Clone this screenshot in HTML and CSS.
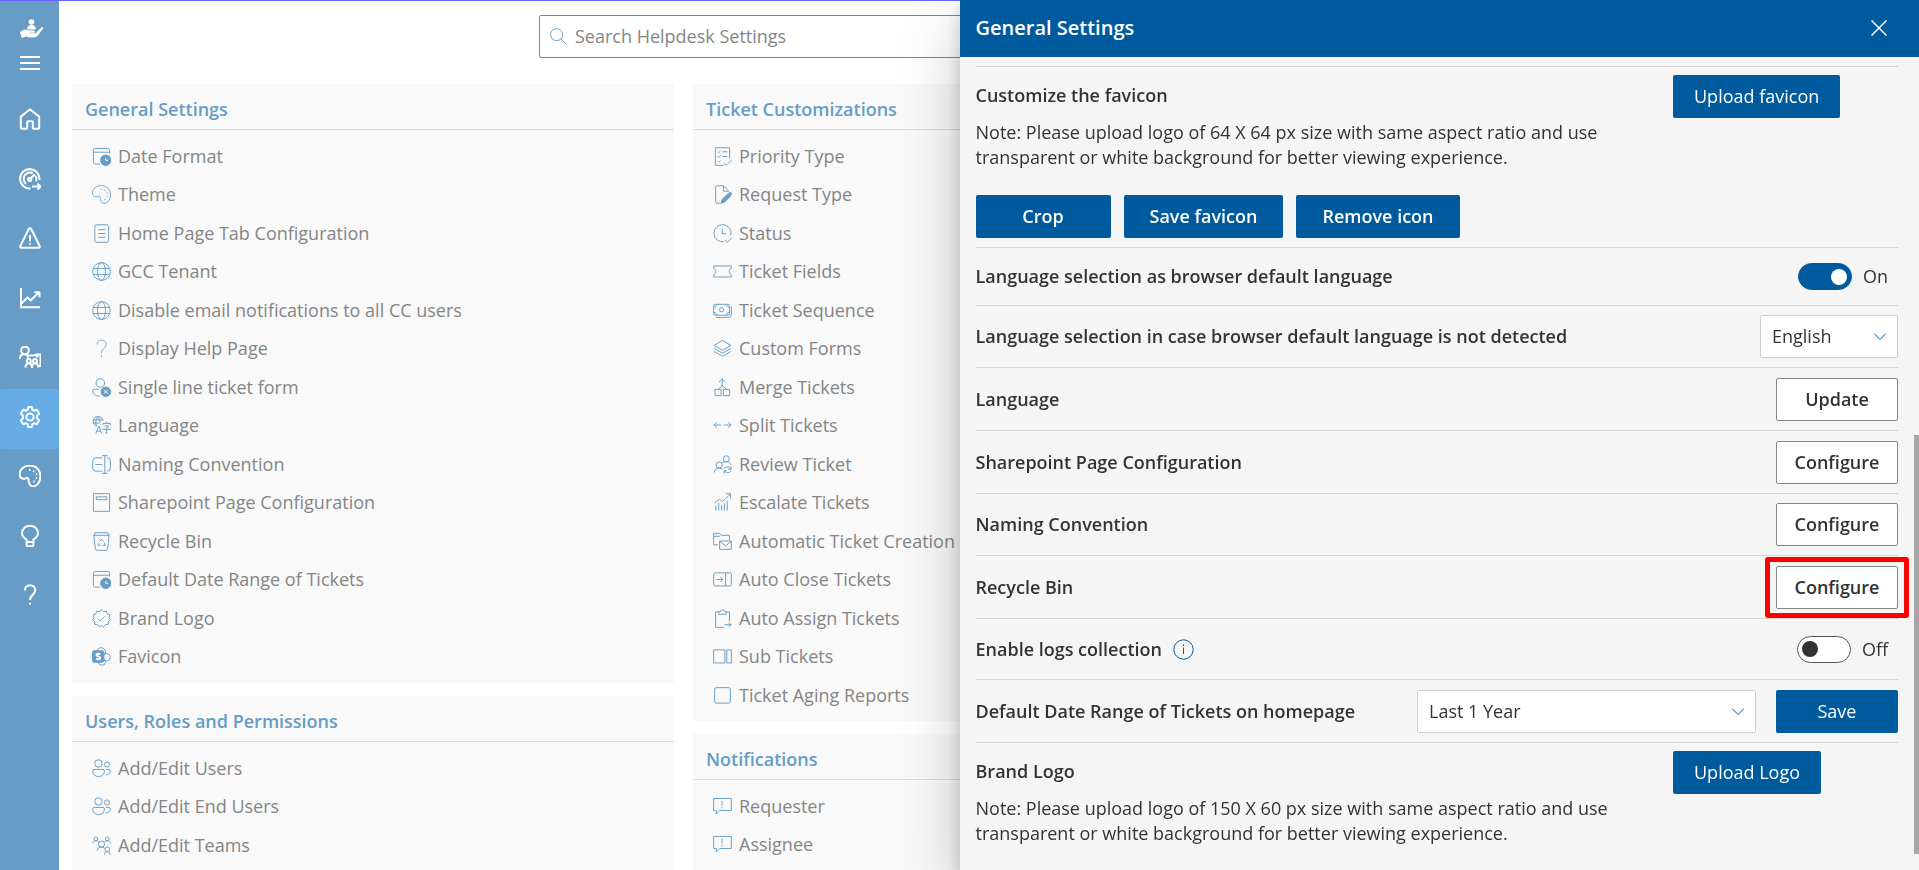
FILE: index.html
```html
<!DOCTYPE html>
<html lang="en">
<head>
<meta charset="utf-8">
<title>Helpdesk Settings</title>
<link rel="stylesheet" href="styles.css">
</head>
<body>
<svg class="sprite" aria-hidden="true">
  <symbol id="i-home" viewBox="0 0 22 22"><path d="M1.8 8.6 11 1.2l9.2 7.4v11.1a1 1 0 0 1-1 1h-4.600a.8.8 0 0 1-.8-.8v-5.600a1 1 0 0 0-1-1H9.200a1 1 0 0 0-1 1v5.600a.8.8 0 0 1-.8.8H2.800a1 1 0 0 1-1-1z"/></symbol>
  <symbol id="i-gauge" viewBox="0 0 22 22"><path d="M11.500 20.500A9.700 9.700 0 1 1 20.400 12M7 16a6.600 6.600 0 0 1-2.300-5A6.300 6.300 0 0 1 11 4.500c1 0 1.900.2 2.700.6M16.500 7.800A6.600 6.600 0 0 1 17 13.500M11.800 10.200 15.800 6.200M13 18.500h8.500M18.500 15.500l3 3-3 3"/><circle cx="10.700" cy="11.300" r="1.600"/></symbol>
  <symbol id="i-warn" viewBox="0 0 22 22"><path d="M11 1.200c.5 0 .9.300 1.200.8l8.500 17c.4.900-.1 1.700-1 1.700H2.300c-.9 0-1.400-.8-1-1.700l8.500-17c.3-.5.7-.8 1.200-.8zM11 8v6.500M11 16.200v1.600"/></symbol>
  <symbol id="i-chart" viewBox="0 0 22 22"><path d="M2 1v19.200h19M2.500 16.500l6-6 3.200 3 8-8M15.500 5.200h5v5"/></symbol>
  <symbol id="i-train" viewBox="0 0 22 22"><circle cx="6" cy="4.500" r="3.800"/><path d="M.8 13c0-3 2-4.700 4.700-4.700 1.800 0 3 .6 4 2M9.500 9.500h6M8.800 9.500v3M15.500 9.500l2-1h4v11.500h-1.500M17 10.500h2.500"/><circle cx="9.800" cy="15" r="2"/><circle cx="16" cy="15" r="2"/><path d="M6.500 21.500c0-2.800 1.300-4 3.300-4s3.200 1.200 3.200 4c0-2.800 1.200-4 3-4s3.300 1.200 3.300 4"/></symbol>
  <symbol id="i-gear" viewBox="0 0 22 22"><circle cx="11" cy="11" r="3.600"/><path d="M9.300.9h3.400l.7 3 1.500.8 2.900-.9 2.300 3.800-2.100 2.100v2.600l2.100 2.100-2.300 3.800-2.900-.9-1.500.8-.7 3H9.300l-.7-3-1.500-.8-2.900.9-2.300-3.800L4 12.300V9.700L1.900 7.600l2.300-3.800 2.900.9 1.500-.8z"/></symbol>
  <symbol id="i-palette" viewBox="0 0 22 22"><path d="M9 13.200c-1.200-1-2.600.7-4.300.6C2 13.700.6 11.500.6 9 .6 4.200 5.500.6 11 .6c6 0 10.400 4.600 10.400 10.400 0 6-3.400 10.400-7.400 10.400-2.500 0-3.600-1.800-4.200-4.400-.3-1.500.2-2.900-.8-3.800z"/><path d="M10 5h1.400M14 6.200h1.400M16.800 9.200h1.400M16.800 13h1.400M14.200 16.500h1.400"/></symbol>
  <symbol id="i-bulb" viewBox="0 0 22 22"><path d="M7.600 14.600C4.900 12.800 3 10.800 3 8.200A7.700 7.700 0 0 1 11 .8a7.700 7.700 0 0 1 8 7.400c0 2.600-1.900 4.600-4.600 6.400v5.200a1.500 1.500 0 0 1-1.500 1.500H9.100a1.500 1.500 0 0 1-1.500-1.500zM7.600 17h6.800"/></symbol>
  <symbol id="i-help" viewBox="0 0 22 22"><path d="M5.800 6.500c0-3.300 2.200-5.300 5.200-5.300s5.300 2 5.300 5c0 2.300-1.200 3.600-2.800 4.900-1.700 1.400-2.500 2.500-2.500 4.900"/><path d="M11 18.800v1.800"/></symbol>
  <symbol id="i-cal" viewBox="0 0 20 20"><path d="M8.500 18H3.500A2 2 0 0 1 1.500 16V3.500a2 2 0 0 1 2-2h13a2 2 0 0 1 2 2V7M1.500 5.500h17"/><circle class="fill" cx="14.500" cy="14" r="5.500"/><path class="cut" d="M14.500 11.500V14h2.500"/></symbol>
  <symbol id="i-doc" viewBox="0 0 20 20"><rect x="3" y=".8" width="14.500" height="18.500" rx="2"/><path d="M6.500 6h7.500M6.500 10h7.500M6.500 14h7.500"/></symbol>
  <symbol id="i-globe" viewBox="0 0 20 20"><circle cx="10" cy="10" r="9.300"/><ellipse cx="10" cy="10" rx="4.200" ry="9.300"/><path d="M1.500 6.800h17M1.500 13.200h17"/></symbol>
  <symbol id="i-userx" viewBox="0 0 20 20"><circle cx="8.800" cy="5.200" r="4.500"/><path d="M7 11.800H2.500A1.800 1.800 0 0 0 .7 13.600c0 3.200 2.800 5.500 7.300 5.500"/><circle class="fill" cx="14.500" cy="14.500" r="5"/><path class="cut" d="m12.500 12.500 4 4m0-4-4 4"/></symbol>
  <symbol id="i-lang" viewBox="0 0 20 20"><path d="M5 10.500A5 5 0 1 1 11.300 5M1 4h10M1 7.500h7M6 1C3.500 4 3.500 7 5 10.500M6 1c1.500 1 2.500 3 2.500 6M4 18.500l3.200-8 3.200 8M5.300 16h4M11.500 9.500V7.800h8v1.700M15.500 6v1.800M13 10.500h4.500l-2 2V18h-1.800M11 14h9"/></symbol>
  <symbol id="i-rename" viewBox="0 0 20 20"><path d="M11 3H4a3.200 3.200 0 0 0-3.200 3.200v7.600A3.200 3.200 0 0 0 4 17h7M16 3a3.200 3.200 0 0 1 3.300 3.200v7.600A3.200 3.200 0 0 1 16 17M13.500.7v18.600M10.500.7h6M10.500 19.300h6M3.500 10h7.500"/></symbol>
  <symbol id="i-page" viewBox="0 0 20 20"><path d="M1.500.7h17v18.600h-17zM4.500 4h11v3h-11z"/></symbol>
  <symbol id="i-recycle" viewBox="0 0 20 20"><path d="M2 3.500 3.300.8h13.400L18 3.500 16.500 17.500a2 2 0 0 1-2 1.800h-9a2 2 0 0 1-2-1.800zM2 3.500h16M8 10l2-2.500L12 10M13 11.500l1 2.500h-3M9 14H6.500l1-2.500"/></symbol>
  <symbol id="i-badge" viewBox="0 0 20 20"><path d="M10 .7 12.200 2.800 15.200 2.300 15.900 5 18.700 6.100 17.900 9 19.300 11.300 17.200 13.300 17 16.200 14.100 16.500 12.200 18.900 10 17.300 7.800 18.900 5.900 16.500 3 16.200 2.800 13.300.7 11.300 2.100 9 1.300 6.100 4.100 5 4.800 2.300 7.800 2.800zM6.500 10.200l2.300 2.300 4.600-4.700"/></symbol>
  <symbol id="i-share" viewBox="0 0 20 20"><circle cx="9.500" cy="5.500" r="4.800"/><circle cx="15.300" cy="10.800" r="4"/><circle cx="10.500" cy="15.500" r="3.700"/><rect class="fill" x=".5" y="4" width="12" height="12" rx="1.500"/><path class="cut thick" d="M8.800 7.600C7 6.600 4.600 7 4.600 8.500c0 1.800 4.100 1.200 4.100 3 0 1.500-2.500 1.800-4.300.8"/></symbol>
  <symbol id="i-users" viewBox="0 0 20 20"><circle cx="6.800" cy="4.700" r="3.900"/><circle cx="15.800" cy="5.800" r="2.700"/><path d="M2.200 11h9.400c.9 0 1.500.6 1.500 1.500 0 3.500-2.400 6-6.200 6s-6.200-2.500-6.200-6c0-.9.600-1.500 1.500-1.500zM14.500 11h3.300c.9 0 1.500.6 1.500 1.500 0 2.700-1.800 4.200-5 4.200"/></symbol>
  <symbol id="i-team" viewBox="0 0 20 20"><circle cx="4" cy="3" r="2"/><circle cx="16" cy="3" r="2"/><circle cx="10" cy="8.500" r="3.200"/><circle cx="16" cy="14" r="2.500"/><path d="M.8 8C.8 5.800 2 5 4 5c1.600 0 2.500.6 3 1.800M19.200 8c0-2.200-1.200-3-3.200-3-1.600 0-2.500.6-3 1.800M5.500 15.500c0-2.500 1.500-3.800 4.500-3.800 1.300 0 2.300.3 3 1M13 20c0-2.500 1-3.500 3-3.500s3 1 3 3.500"/></symbol>
  <symbol id="i-list" viewBox="0 0 20 20"><path d="M17.500 12V.8h-15v18.500h9M5 5l1 1 2-2M10 5h5M5 10l1 1 2-2M10 10h5M5 15l1 1 2-2M11.500 17l2.500 2.300 5.500-5.500"/></symbol>
  <symbol id="i-edit" viewBox="0 0 20 20"><path d="M8 19.200H4.300a1.500 1.500 0 0 1-1.500-1.500V2.300A1.500 1.500 0 0 1 4.300.8H11l5.500 5.700M11 .8v5.700h5.500"/><path class="fill" d="m9.500 15.200 6.700-6.300 2.600 2.500-6.600 6.600-3.400 1.200zM17 8.200c1.500-1.300 3.500.7 2.400 2.300z"/></symbol>
  <symbol id="i-clock" viewBox="0 0 20 20"><path d="M11.500 18.600A9 9 0 1 1 18.700 12M9.700 4.500v5.800h4M12.500 17l2.500 2.300 4.800-4.800"/></symbol>
  <symbol id="i-ticket" viewBox="0 0 20 20"><path d="M.7 4.200h18.600v2.500c-3 1.200-3 5.400 0 6.600v2.500H.7v-2.500c3-1.200 3-5.400 0-6.600z"/></symbol>
  <symbol id="i-money" viewBox="0 0 20 20"><rect x=".7" y="3.500" width="16.600" height="11.500" rx="1.500"/><circle cx="9" cy="9.200" r="2.200"/><path d="M.7 6.500c2 0 3-1 3-3M17.300 6.500c-2 0-3-1-3-3M.7 12c2 0 3 1 3 3M17.300 12c-2 0-3 1-3 3M3 17.300h13.300a3 3 0 0 0 3-3V5.500"/></symbol>
  <symbol id="i-layers" viewBox="0 0 20 20"><path d="m10 1.500 8.800 5.300L10 12 1.200 6.800zM1.200 10 10 15l8.800-5M1.200 13.200 10 18.300l8.800-5.100"/></symbol>
  <symbol id="i-merge" viewBox="0 0 20 20"><path d="M2 12h6.500v6.500H2zM11 12h6.500v6.500H11zM6 12c0-2 3.700-2 3.700-5V1M9.700 7c0 3 4 3 4 5M6.200 4.300 9.700 1l3.500 3.300"/></symbol>
  <symbol id="i-split" viewBox="0 0 20 20"><path d="M8.500 9.500H1M4 6.500l-3 3 3 3M11.500 9.500H19M16 6.500l3 3-3 3"/></symbol>
  <symbol id="i-review" viewBox="0 0 20 20"><circle cx="14" cy="4" r="3.200"/><circle cx="6.500" cy="10.500" r="3.300"/><path d="M1.500 18.500c0-3 1.800-4.700 5-4.700 1.500 0 2.600.4 3.400 1.100M9.800 8c1-.6 2.500-.9 4.200-.9 2.800 0 4.500 1.300 4.900 3.400M11.500 14.500c1-2.300 5.500-2.800 7 0M19 12v3h-3M19.200 16.500c-1 2.500-5.500 2.800-7 .2M11.800 19.500v-3h2.700"/></symbol>
  <symbol id="i-escalate" viewBox="0 0 20 20"><path d="m1.500 10.500 5.500-4 3 2.500 8.500-8M13.500.8h5v5M3 13v5.500M6 10.500v8M9 12.500v6M12 11v7.500M15 8.500v10"/></symbol>
  <symbol id="i-mail" viewBox="0 0 20 20"><path d="M5 13.500H.7V1.500h6l2 2h8.600v5M.7 4.500h6.500M7 9.500h12.300v8.800H7zM7 10l6.200 4.500 6.100-4.500"/></symbol>
  <symbol id="i-exit" viewBox="0 0 20 20"><rect x=".7" y="3" width="18.600" height="13.800" rx="1.500"/><path d="M13.300 3v13.800M3.500 10H10M7.500 7.300 10.200 10l-2.700 2.700"/></symbol>
  <symbol id="i-clip" viewBox="0 0 20 20"><path d="M6 3H2.800v16.300h9M14 3h3.300v10M6 2.800h2a2 2 0 0 1 4 0h2v2.700H6zM12 16.500h7M16.500 14l2.500 2.500-2.500 2.500"/></symbol>
  <symbol id="i-columns" viewBox="0 0 20 20"><path d="M.7 3h11.800v13.800H.7zM14.500 3h4.800v13.800h-4.800z"/></symbol>
  <symbol id="i-square" viewBox="0 0 20 20"><rect x="1.700" y="1.700" width="16.600" height="16.300" rx="2"/></symbol>
  <symbol id="i-chat" viewBox="0 0 20 20"><path d="M.7 1.500h18.600v12.700H7L3.500 18v-3.800H.7zM9.500 4v5M9.500 10.500V12"/></symbol>
</svg>

<div class="app">
  <nav class="rail" aria-label="Main">
    <svg class="logo" viewBox="0 0 24 20"><circle cx="11.500" cy="3" r="2.800"/><path d="M7.300 10.500c0-3.500 1.700-4.500 4.200-4.500s4.200 1 4.200 4.500zM0 13.200c2-1.500 4-3 6.300-2.500l3 .9h4.500c1.300 0 1.600 1.800.2 2.200H9.500v.5h6l5.500-5.600c1-.9 2.800-.3 2.200.9L17.500 17c-.8.9-1.600 1.300-3 1.300l-6 .3-2.500-1L1.800 19z"/></svg>
    <button class="menu" aria-label="Menu"><svg viewBox="0 0 20 14"><path d="M0 1h20M0 7h20M0 13h20"/></svg></button>
    <a href="#" aria-label="Home"><svg><use href="#i-home"/></svg></a>
    <a href="#" aria-label="Dashboard"><svg><use href="#i-gauge"/></svg></a>
    <a href="#" aria-label="Alerts"><svg><use href="#i-warn"/></svg></a>
    <a href="#" aria-label="Reports"><svg><use href="#i-chart"/></svg></a>
    <a href="#" aria-label="Teams"><svg><use href="#i-train"/></svg></a>
    <a href="#" aria-label="Settings" class="active"><svg><use href="#i-gear"/></svg></a>
    <a href="#" aria-label="Theme"><svg><use href="#i-palette"/></svg></a>
    <a href="#" aria-label="Ideas"><svg><use href="#i-bulb"/></svg></a>
    <a href="#" aria-label="Help"><svg><use href="#i-help"/></svg></a>
  </nav>

  <main class="main">
    <label class="search">
      <svg viewBox="0 0 18 18"><circle cx="7" cy="7" r="6.400"/><path d="m11.500 11.500 6 6"/></svg>
      <input type="search" placeholder="Search Helpdesk Settings" aria-label="Search Helpdesk Settings">
    </label>
    <div class="columns">
      <div class="column">
        <section class="card">
          <h2>General Settings</h2>
          <ul>
            <li><a href="#"><svg><use href="#i-cal"/></svg>Date Format</a></li>
            <li><a href="#"><svg><use href="#i-palette"/></svg>Theme</a></li>
            <li><a href="#"><svg><use href="#i-doc"/></svg>Home Page Tab Configuration</a></li>
            <li><a href="#"><svg><use href="#i-globe"/></svg>GCC Tenant</a></li>
            <li><a href="#"><svg><use href="#i-globe"/></svg>Disable email notifications to all CC users</a></li>
            <li><a href="#"><svg><use href="#i-help"/></svg>Display Help Page</a></li>
            <li><a href="#"><svg><use href="#i-userx"/></svg>Single line ticket form</a></li>
            <li><a href="#"><svg><use href="#i-lang"/></svg>Language</a></li>
            <li><a href="#"><svg><use href="#i-rename"/></svg>Naming Convention</a></li>
            <li><a href="#"><svg><use href="#i-page"/></svg>Sharepoint Page Configuration</a></li>
            <li><a href="#"><svg><use href="#i-recycle"/></svg>Recycle Bin</a></li>
            <li><a href="#"><svg><use href="#i-cal"/></svg>Default Date Range of Tickets</a></li>
            <li><a href="#"><svg><use href="#i-badge"/></svg>Brand Logo</a></li>
            <li><a href="#"><svg><use href="#i-share"/></svg>Favicon</a></li>
          </ul>
        </section>
        <section class="card">
          <h2>Users, Roles and Permissions</h2>
          <ul>
            <li><a href="#"><svg><use href="#i-users"/></svg>Add/Edit Users</a></li>
            <li><a href="#"><svg><use href="#i-users"/></svg>Add/Edit End Users</a></li>
            <li><a href="#"><svg><use href="#i-team"/></svg>Add/Edit Teams</a></li>
          </ul>
        </section>
      </div>
      <div class="column">
        <section class="card">
          <h2>Ticket Customizations</h2>
          <ul>
            <li><a href="#"><svg><use href="#i-list"/></svg>Priority Type</a></li>
            <li><a href="#"><svg><use href="#i-edit"/></svg>Request Type</a></li>
            <li><a href="#"><svg><use href="#i-clock"/></svg>Status</a></li>
            <li><a href="#"><svg><use href="#i-ticket"/></svg>Ticket Fields</a></li>
            <li><a href="#"><svg><use href="#i-money"/></svg>Ticket Sequence</a></li>
            <li><a href="#"><svg><use href="#i-layers"/></svg>Custom Forms</a></li>
            <li><a href="#"><svg><use href="#i-merge"/></svg>Merge Tickets</a></li>
            <li><a href="#"><svg><use href="#i-split"/></svg>Split Tickets</a></li>
            <li><a href="#"><svg><use href="#i-review"/></svg>Review Ticket</a></li>
            <li><a href="#"><svg><use href="#i-escalate"/></svg>Escalate Tickets</a></li>
            <li><a href="#"><svg><use href="#i-mail"/></svg>Automatic Ticket Creation</a></li>
            <li><a href="#"><svg><use href="#i-exit"/></svg>Auto Close Tickets</a></li>
            <li><a href="#"><svg><use href="#i-clip"/></svg>Auto Assign Tickets</a></li>
            <li><a href="#"><svg><use href="#i-columns"/></svg>Sub Tickets</a></li>
            <li><a href="#"><svg><use href="#i-square"/></svg>Ticket Aging Reports</a></li>
          </ul>
        </section>
        <section class="card">
          <h2>Notifications</h2>
          <ul>
            <li><a href="#"><svg><use href="#i-chat"/></svg>Requester</a></li>
            <li><a href="#"><svg><use href="#i-chat"/></svg>Assignee</a></li>
          </ul>
        </section>
      </div>
    </div>
  </main>
</div>

<aside class="panel" aria-label="General Settings">
  <header class="panel-head">
    <h1>General Settings</h1>
    <button class="close" aria-label="Close"><svg viewBox="0 0 16 16"><path d="m.5.500 15 15m0-15-15 15"/></svg></button>
  </header>
  <div class="panel-body">
    <section class="upload">
      <div class="upload-text">
        <h3>Customize the favicon</h3>
        <p>Note: Please upload logo of 64 X 64 px size with same aspect ratio and use transparent or white background for better viewing experience.</p>
      </div>
      <div><button class="btn primary light">Upload favicon</button></div>
      <div class="actions">
        <button class="btn primary crop">Crop</button>
        <button class="btn primary">Save favicon</button>
        <button class="btn primary">Remove icon</button>
      </div>
    </section>
    <div class="row row-toggle">
      <label for="lang-auto">Language selection as browser default language</label>
      <span class="toggle"><input type="checkbox" role="switch" id="lang-auto" checked><span>On</span></span>
    </div>
    <div class="row row-snug">
      <label for="lang">Language selection in case browser default language is not detected</label>
      <span class="select"><select id="lang"><option>English</option></select><svg viewBox="0 0 12 7"><path d="m0 .5 6 6 6-6"/></svg></span>
    </div>
    <div class="row"><h3>Language</h3><button class="btn outline">Update</button></div>
    <div class="row"><h3>Sharepoint Page Configuration</h3><button class="btn outline">Configure</button></div>
    <div class="row row-snug"><h3>Naming Convention</h3><button class="btn outline">Configure</button></div>
    <div class="row"><h3>Recycle Bin</h3><button class="btn outline highlight">Configure</button></div>
    <div class="row row-log">
      <div class="with-info">
        <label for="logs">Enable logs collection</label>
        <svg class="info" viewBox="0 0 21 21" role="img" aria-label="Information"><circle cx="10.500" cy="10.500" r="9.700"/><path d="M10.500 8.500v6.500M10.500 5.500v1.500"/></svg>
      </div>
      <span class="toggle"><input type="checkbox" role="switch" id="logs"><span>Off</span></span>
    </div>
    <div class="row">
      <label for="range">Default Date Range of Tickets on homepage</label>
      <div class="range">
        <span class="select wide"><select id="range"><option>Last 1 Year</option></select><svg viewBox="0 0 12 7"><path d="m0 .5 6 6 6-6"/></svg></span>
        <button class="btn primary light save">Save</button>
      </div>
    </div>
    <section class="upload last">
      <div class="upload-text">
        <h3>Brand Logo</h3>
        <p>Note: Please upload logo of 150 X 60 px size with same aspect ratio and use transparent or white background for better viewing experience.</p>
      </div>
      <div><button class="btn primary light">Upload Logo</button></div>
    </section>
  </div>
  <div class="thumb"></div>
</aside>
</body>
</html>
```

FILE: styles.css
```css
* { box-sizing: border-box; }

body {
  margin: 0;
  height: 100vh;
  overflow: hidden;
  background: #fff;
  color: #333;
  font-family: "Open Sans", "Noto Sans", sans-serif;
  font-size: 18px;
  line-height: 25px;
}

h1, h2, h3, p, ul { margin: 0; padding: 0; }
ul { list-style: none; }
a { color: inherit; text-decoration: none; }
button, input, select { font: inherit; color: inherit; margin: 0; }
button { cursor: pointer; }
svg { fill: none; stroke: currentColor; flex: none; }
.sprite { position: absolute; width: 0; height: 0; }
.fill { fill: currentColor; }
.cut { stroke: #fff; }
.thick { stroke-width: 2; }

.app {
  display: flex;
  height: 100vh;
  overflow: hidden;
  border-top: 1px solid #6666ff;
}

/* Navigation rail */
.rail {
  flex: none;
  width: 59px;
  display: flex;
  flex-direction: column;
  align-items: center;
  background: #669cc5;
  color: #fff;
}
.logo { width: 24px; height: 20px; margin: 18px 0 8px 4px; fill: #fff; stroke: none; }
.menu { width: 100%; height: 32px; margin-bottom: 13px; padding: 0; border: 0; background: none; color: #fff; }
.menu svg { display: block; width: 20px; height: 14px; margin: 0 auto; stroke-width: 2; }
.rail a { width: 100%; height: 59px; padding-bottom: 5px; display: grid; place-items: center; border-radius: 3px; }
.rail a:nth-child(even) { height: 60px; }
.rail a svg { width: 22px; height: 22px; stroke-width: 2; stroke-linejoin: round; }
.rail a.active { background: #66ade8; }

/* Settings overview */
.main { flex: 1; min-width: 0; padding-top: 14px; }
.search {
  display: flex;
  align-items: center;
  gap: 8px;
  width: 900px;
  max-width: 100%;
  height: 43px;
  margin: 0 auto 26px;
  padding: 0 10px;
  border: 1px solid #858585;
  border-radius: 2px;
  color: #669cc5;
}
.search svg { width: 17px; height: 17px; }
.search input { flex: 1; border: 0; outline: 0; padding: 0; background: none; }
.search input::placeholder { color: #858585; opacity: 1; }
.columns { display: grid; grid-template-columns: repeat(3, 1fr); column-gap: 19px; margin: 0 3px 0 13px; }
.column { display: flex; flex-direction: column; gap: 13px; }
.card { background: #f9f9f9; padding-bottom: 7px; }
.card h2 {
  padding: 13px 13px 7px;
  margin-bottom: 7px;
  border-bottom: 1px solid #ddd;
  color: #669cc5;
  font-size: 18px;
  font-weight: 600;
}
.card li { height: 38px; color: #858585; }
.card li:nth-child(even) { height: 39px; }
.card li a { display: flex; align-items: center; gap: 7px; height: 38px; padding-left: 20px; }
.card li svg { width: 19px; height: 19px; color: #669cc5; }

/* Side panel */
.panel {
  position: fixed;
  top: 0;
  right: 0;
  width: 50%;
  height: 100vh;
  display: flex;
  flex-direction: column;
  background: #f5f5f5;
  box-shadow: 0 26px 58px rgba(0, 0, 0, .22), 0 5px 14px rgba(0, 0, 0, .18);
}
.panel-head {
  display: flex;
  align-items: center;
  justify-content: space-between;
  height: 57px;
  padding: 0 32px 2px 16px;
  background: #005a9e;
  color: #fff;
}
.panel-head h1 { font-size: 20px; font-weight: 600; }
.close { padding: 0; border: 0; background: none; color: #fff; }
.close svg { display: block; width: 16px; height: 16px; stroke-width: 1.5; }
.panel-body { padding: 9px 21px 0 16px; }
.thumb {
  position: absolute;
  right: 0;
  top: 50%;
  width: 5px;
  height: calc(50% - 16px);
  background: #a6a6a6;
}

.row {
  display: flex;
  align-items: center;
  justify-content: space-between;
  min-height: 63px;
  border-bottom: 1px solid #d8d2d2;
}
.row-snug { min-height: 62px; }
.row-log { min-height: 61px; }
.row-toggle { min-height: 58px; }
.row h3, .row label, .upload h3 { font-size: 18px; font-weight: 600; }
.with-info { display: flex; align-items: center; gap: 11px; }
.info { width: 21px; height: 21px; color: #005a9e; }

.upload {
  display: grid;
  grid-template-columns: minmax(0, 1fr) 225px;
  padding: 8px 0 9px;
  border-top: 1px solid #d8d2d2;
  border-bottom: 1px solid #d8d2d2;
}
.upload.last { border: 0; }
.upload-text { padding: 8px 48px 0 0; }
.upload-text p { margin-top: 12px; }
.actions { grid-column: 1 / -1; display: flex; gap: 13px; margin-top: 25px; }

.btn {
  height: 43px;
  padding: 0 25px;
  border: 1px solid transparent;
  border-radius: 2px;
  font-weight: 600;
}
.primary { background: #005a9e; color: #fff; }
.primary.light { font-weight: 400; padding: 0 20px; }
.crop { width: 135px; }
.outline { width: 122px; padding: 0; background: #fff; border-color: #858585; }
.primary.save { width: 122px; }
.highlight { position: relative; }
.highlight::after {
  content: "";
  position: absolute;
  inset: -10px -12px;
  border: 5px solid #f00;
  border-radius: 3px;
}

.toggle { display: flex; align-items: center; gap: 11px; padding-right: 10px; }
.toggle input {
  appearance: none;
  width: 54px;
  height: 27px;
  padding: 4px;
  display: flex;
  align-items: center;
  background: #fff;
  border: 1px solid #555;
  border-radius: 14px;
}
.toggle input::before { content: ""; width: 16px; height: 16px; border-radius: 50%; background: #333; }
.toggle input:checked { justify-content: flex-end; background: #005a9e; border-color: #005a9e; }
.toggle input:checked::before { background: #fff; }

.select { display: grid; align-items: center; width: 138px; }
.select.wide { width: 339px; }
.select > * { grid-area: 1 / 1; }
.select select {
  appearance: none;
  width: 100%;
  height: 43px;
  padding: 0 36px 0 11px;
  border: 1px solid #d0d0d0;
  border-radius: 2px;
  background: #fff;
}
.select svg { justify-self: end; width: 12px; height: 7px; margin-right: 12px; color: #005a9e; pointer-events: none; }
.range { display: flex; gap: 20px; }
```
